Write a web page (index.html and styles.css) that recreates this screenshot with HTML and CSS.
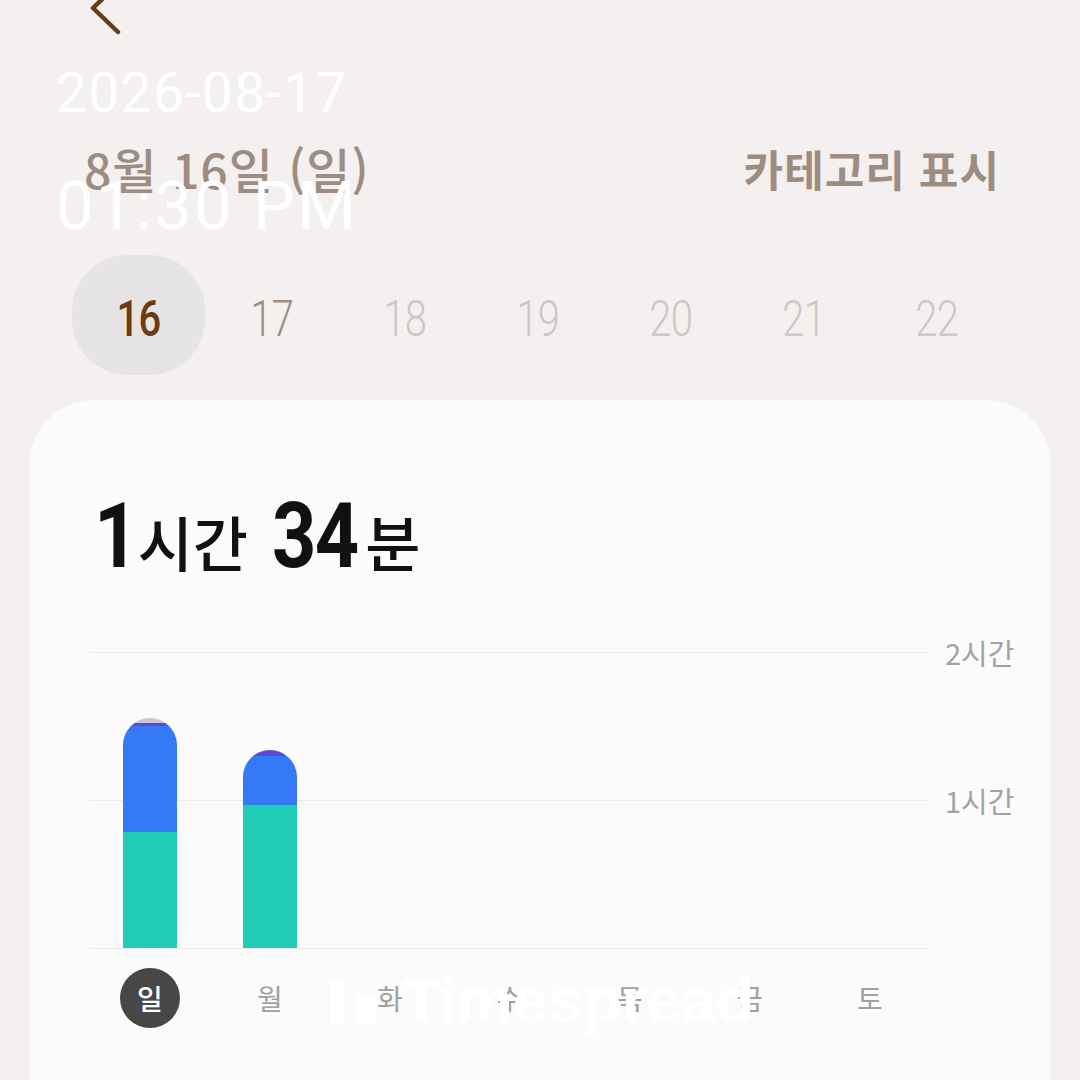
FILE: index.html
```html
<!DOCTYPE html>
<html lang="ko">
<head>
<meta charset="utf-8">
<link rel="stylesheet" href="styles.css">
</head>
<body>
<div class="screen">
  <div class="topbar">
    <svg class="back" width="40" height="40" viewBox="0 0 40 40">
      <polyline points="30,-16 5,8 30,32" fill="none" stroke="#6b3b18" stroke-width="4.5" stroke-linecap="round" stroke-linejoin="round"/>
    </svg>
  </div>
  <div class="header">
    <div class="date-title">8월 16일 (일)</div>
    <div class="cat">카테고리 표시</div>
  </div>
  <div class="days">
    <div class="day sel"><span>16</span></div>
    <div class="day near"><span>17</span></div>
    <div class="day"><span>18</span></div>
    <div class="day"><span>19</span></div>
    <div class="day"><span>20</span></div>
    <div class="day"><span>21</span></div>
    <div class="day"><span>22</span></div>
  </div>
  <div class="card">
    <div class="total"><span class="n n1">1</span><span class="k">시간</span><span class="n n2">34</span><span class="k">분</span></div>
    <div class="chart">
      <div class="plot">
        <div class="grow"></div>
        <div class="grow"></div>
        <div class="bars">
          <div class="col">
            <div class="bar">
              <div class="seg gray" style="height:5px"></div>
              <div class="seg purple" style="height:3px"></div>
              <div class="seg blue" style="height:106px"></div>
              <div class="seg teal" style="height:116px"></div>
            </div>
          </div>
          <div class="col">
            <div class="bar">
              <div class="seg purple" style="height:6px"></div>
              <div class="seg blue" style="height:49px"></div>
              <div class="seg teal" style="height:143px"></div>
            </div>
          </div>
          <div class="col"></div>
          <div class="col"></div>
          <div class="col"></div>
          <div class="col"></div>
          <div class="col"></div>
        </div>
      </div>
      <div class="axis">
        <div class="lbl"><span>2시간</span></div>
        <div class="lbl"><span>1시간</span></div>
      </div>
    </div>
    <div class="week">
      <div class="wd sel"><span>일</span></div>
      <div class="wd"><span>월</span></div>
      <div class="wd"><span>화</span></div>
      <div class="wd"><span>수</span></div>
      <div class="wd"><span>목</span></div>
      <div class="wd"><span>금</span></div>
      <div class="wd"><span>토</span></div>
    </div>
  </div>

  <div class="stamp-date">2026-08-17</div>
  <div class="stamp-time">01:30 PM</div>
  <div class="watermark">
    <svg width="46" height="46" viewBox="0 0 46 46"><rect x="0" y="1" width="15" height="45" fill="#fff"/><rect x="27" y="16" width="18" height="30" fill="#fff"/></svg>
    <span>Timespread</span>
  </div>
</div>
</body>
</html>
```

FILE: styles.css
```css
* { box-sizing: border-box; }
html, body { margin: 0; padding: 0; }
body {
  width: 1080px;
  height: 1080px;
  overflow: hidden;
  background: #f4f0ef;
  font-family: "Noto Sans CJK KR", "Noto Sans", sans-serif;
}
.screen { position: relative; width: 1080px; height: 1080px; overflow: hidden; }

.topbar { height: 140px; padding-left: 88px; }
.back { display: block; }

.header {
  height: 56px;
  display: flex;
  justify-content: space-between;
  align-items: center;
  padding: 0 80px 0 84px;
}
.date-title {
  font-size: 48px;
  font-weight: 500;
  color: #9d8c81;
  line-height: 56px;
  letter-spacing: 1px;
  white-space: nowrap;
}
.cat {
  font-size: 43px;
  font-weight: 700;
  color: #9d8c81;
  line-height: 56px;
  letter-spacing: 1px;
  white-space: nowrap;
}

.days {
  margin-top: 59px;
  padding-left: 72px;
  display: grid;
  grid-template-columns: repeat(7, 133px);
  height: 120px;
}
.day {
  display: flex;
  align-items: center;
  justify-content: center;
  font-family: "Roboto", "Noto Sans", sans-serif;
  font-size: 50px;
  font-weight: 300;
  color: #cbc8c7;
  border-radius: 56px;
  padding-top: 8px;
}
.day span { display: inline-block; transform: scaleX(0.8); letter-spacing: -1px; }
.day.sel { background: #e6e4e4; color: #6e3a12; font-weight: 500; }
.day.near { color: #9e8d83; }

.card {
  margin: 25px 30px 0;
  height: 720px;
  background: #fbfbfb;
  border-radius: 64px 64px 0 0;
  padding: 87px 0 0 60px;
}
.total {
  height: 100px;
  line-height: 100px;
  color: #111;
  white-space: nowrap;
}
.total .n {
  font-family: "Roboto", "Noto Sans", sans-serif;
  font-size: 90px;
  font-weight: 700;
  display: inline-block;
  transform: scaleX(0.86);
  transform-origin: left center;
  letter-spacing: -2px;
}
.total .n1 { margin-left: 4px; margin-right: -6px; }
.total .n2 { margin-left: 24px; margin-right: -6px; }
.total .k {
  font-size: 60px;
  font-weight: 500;
}

.chart {
  margin-top: 65px;
  display: flex;
}
.plot {
  position: relative;
  width: 840px;
  border-bottom: 1px solid #ebebeb;
}
.grow {
  height: 148px;
  border-top: 1px solid #ebebeb;
}
.bars {
  position: absolute;
  inset: 0;
  display: grid;
  grid-template-columns: repeat(7, 120px);
  align-items: end;
}
.col { display: flex; justify-content: center; align-items: flex-end; height: 100%; }
.bar {
  width: 54px;
  border-radius: 27px 27px 0 0;
  overflow: hidden;
  display: flex;
  flex-direction: column;
}
.seg { width: 100%; }
.gray { background: #c9c8d3; }
.purple { background: #6048d6; }
.blue { background: #3579f7; }
.teal { background: #1fcdb7; }

.axis { padding-left: 15px; }
.lbl { height: 148px; }
.lbl span {
  display: block;
  font-size: 29px;
  line-height: 30px;
  color: #a3a3a3;
  transform: translateY(-50%);
  white-space: nowrap;
}

.week {
  margin-top: 19px;
  display: grid;
  grid-template-columns: repeat(7, 120px);
  height: 60px;
}
.wd {
  display: flex;
  align-items: center;
  justify-content: center;
  font-size: 28px;
  color: #a0a0a0;
}
.wd span {
  width: 60px;
  height: 60px;
  border-radius: 50%;
  display: flex;
  align-items: center;
  justify-content: center;
}
.wd.sel span { background: #474747; color: #fff; font-weight: 500; }

.stamp-date {
  position: absolute;
  left: 56px;
  top: 66px;
  font-family: "Roboto", "Noto Sans", sans-serif;
  font-size: 55px;
  line-height: 55px;
  color: #fff;
  letter-spacing: 1.4px;
}
.stamp-time {
  position: absolute;
  left: 56px;
  top: 173px;
  font-family: "Roboto", "Noto Sans", sans-serif;
  font-size: 67px;
  line-height: 66px;
  color: #fff;
  letter-spacing: 2.2px;
}
.watermark {
  position: absolute;
  left: 330px;
  top: 972px;
  display: flex;
  align-items: center;
  gap: 26px;
  color: #fff;
  font-family: "Liberation Sans", "Arial", sans-serif;
  font-weight: 700;
  font-size: 63px;
  line-height: 56px;
}
.watermark svg { display: block; margin-top: 4px; }
```
